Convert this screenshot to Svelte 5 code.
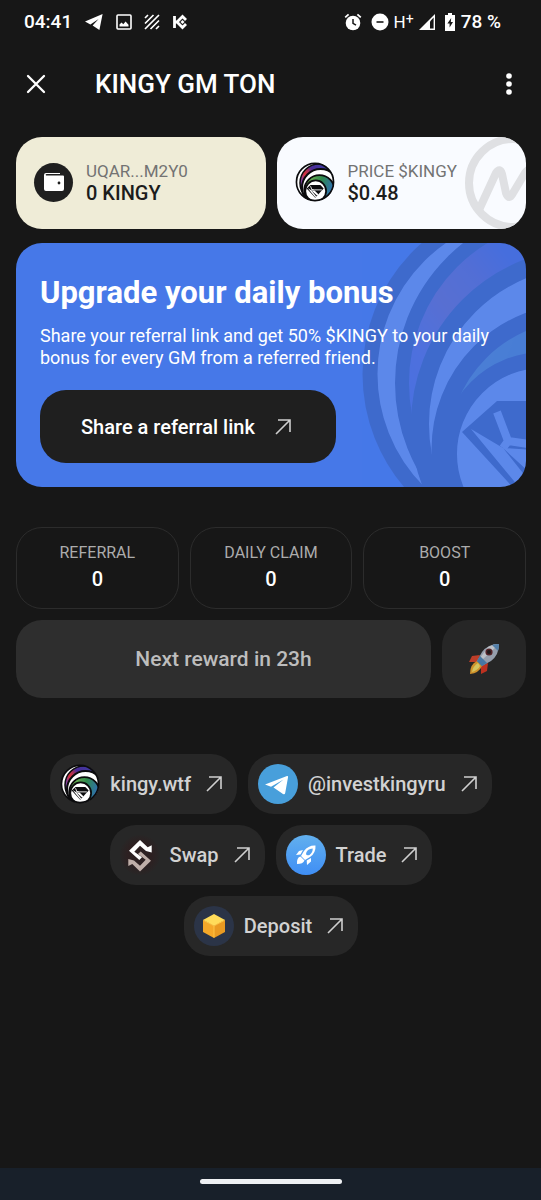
<script lang="ts">
  type Chip = { label: string; icon: string; href: string };

  const stats = [
    { label: 'REFERRAL', value: 0 },
    { label: 'DAILY CLAIM', value: 0 },
    { label: 'BOOST', value: 0 }
  ];

  const chips: Chip[] = [
    { label: 'kingy.wtf', icon: 'kingy', href: '#kingy' },
    { label: '@investkingyru', icon: 'telegram', href: '#telegram' },
    { label: 'Swap', icon: 'swap', href: '#swap' },
    { label: 'Trade', icon: 'trade', href: '#trade' },
    { label: 'Deposit', icon: 'deposit', href: '#deposit' }
  ];
</script>

<!-- Nested ring logo, id keeps the gradient references unique -->
{#snippet kingyLogo(id: string)}
  <svg class="logo" viewBox="-180 -180 360 360" aria-hidden="true">
    <defs>
      <linearGradient id="{id}-a" gradientUnits="userSpaceOnUse" x1="-130" y1="60" x2="110" y2="-130">
        <stop offset="0" stop-color="#5b3fb0" />
        <stop offset="0.2" stop-color="#8a3f98" />
        <stop offset="0.36" stop-color="#d8343c" />
        <stop offset="0.5" stop-color="#a82f58" />
        <stop offset="0.62" stop-color="#4b2a96" />
        <stop offset="1" stop-color="#3d3aa0" />
      </linearGradient>
      <linearGradient id="{id}-b" gradientUnits="userSpaceOnUse" x1="-80" y1="0" x2="150" y2="80">
        <stop offset="0.1" stop-color="#6aae52" />
        <stop offset="0.5" stop-color="#2f8a4c" />
        <stop offset="1" stop-color="#2f6fb0" />
      </linearGradient>
      <clipPath id="{id}-c"><circle r="170" /></clipPath>
    </defs>
    <g clip-path="url(#{id}-c)" stroke="#0b0b0d">
      <circle r="172" fill="#fff" />
      <circle cx="36" cy="9" r="171" fill="url(#{id}-a)" stroke-width="14" />
      <circle cx="50" cy="50" r="167" fill="#fff" stroke-width="18" />
      <circle cx="40" cy="75" r="137" fill="url(#{id}-b)" stroke-width="17" />
      <circle cx="6" cy="80" r="94" fill="#fff" stroke-width="16" />
      <path d="M-40 27H48L78 58 2 142-75 58Z" fill="#0b0b0d" stroke="none" />
      <path d="M-66 55-34 74 20 142-4 130ZM-34 74-4 76 30 110 20 124Z" fill="#fff" stroke="none" />
      <path d="M-40 38-29 67-2 71H62M-29 67-34 74" fill="none" stroke="#fff" stroke-width="8" />
    </g>
    <circle r="167" fill="none" stroke="#0b0b0d" stroke-width="15" />
  </svg>
{/snippet}

{#snippet arrow()}
  <svg class="arrow" viewBox="0 0 16 16" aria-hidden="true">
    <path d="M3 1H15V13M15 1 1 15" />
  </svg>
{/snippet}

<div class="app">
  <div class="status">
    <div class="status-group">
      <span class="clock">04:41</span>
      <svg width="20" height="18" viewBox="0 0 20 18"><path d="M1 8.6 18.6 1 15.4 17 8.6 12.4 14.6 6 6.4 11.4Z" fill="#fff" /></svg>
      <svg width="16" height="16" viewBox="0 0 16 16"><rect x="1" y="1" width="14" height="14" rx="1" fill="none" stroke="#fff" stroke-width="1.6" /><path d="M3.5 12.5V10.5L5.5 8.5 7.3 10.3 9.6 7.6 12.5 10.7V12.5Z" fill="#fff" /></svg>
      <svg width="16" height="16" viewBox="0 0 16 16"><path d="M1 4 4 1M1 9.5 9.5 1M1 15 15 1M6.5 15 15 6.5M12 15 15 12" fill="none" stroke="#fff" stroke-width="1.7" /></svg>
      <svg width="17" height="18" viewBox="0 0 17 18">
        <path d="M2.500 3V15M2.500 9H5M5 9 10.500 3.500 14 7M5 9 10.500 14.500 14 11" fill="none" stroke="#fff" stroke-width="2.800" />
        <path d="M10.500 7 12.500 9 10.500 11 8.500 9Z" fill="#fff" />
      </svg>
    </div>
    <div class="status-group right">
      <svg width="18" height="18" viewBox="0 0 18 18"><circle cx="9" cy="10" r="7.3" fill="#fff" /><path d="M1.2 4.4 4.6 1.4M16.8 4.4 13.4 1.4" stroke="#fff" stroke-width="1.8" /><path d="M9 6V10.4L12 12.2" fill="none" stroke="#171717" stroke-width="1.5" /></svg>
      <svg class="dnd" width="18" height="18" viewBox="0 0 18 18"><circle cx="9" cy="9" r="8.5" fill="#fff" /><path d="M5.5 9H12.5" stroke="#171717" stroke-width="1.6" /></svg>
      <span class="network">H<span class="plus">+</span></span>
      <svg width="16" height="16" viewBox="0 0 16 16"><path d="M0 16 16 0V16Z" fill="#fff" /><path d="M11 7.4 14.6 3.6V14.6H11Z" fill="#171717" /></svg>
      <svg class="battery" width="12" height="18" viewBox="0 0 12 18"><path d="M4 0H8V2H11V18H1V2H4Z" fill="#fff" /><path d="M7.2 5 3.4 10.6H5.6V14.6L9 9H6.8Z" fill="#171717" /></svg>
      <span class="percent">78 %</span>
    </div>
  </div>

  <header class="topbar">
    <button class="icon-button" aria-label="Close">
      <svg width="20" height="20" viewBox="0 0 20 20"><path d="M2 2 18 18M18 2 2 18" stroke="#fff" stroke-width="2.3" stroke-linecap="round" /></svg>
    </button>
    <h1>KINGY GM TON</h1>
    <button class="icon-button" aria-label="Menu">
      <svg width="8" height="22" viewBox="0 0 8 22" fill="#fff"><circle cx="4" cy="3" r="2.8" /><circle cx="4" cy="11" r="2.8" /><circle cx="4" cy="19" r="2.8" /></svg>
    </button>
  </header>

  <main>
    <div class="cards">
      <section class="card wallet">
        <span class="wallet-icon">
          <svg width="22" height="20" viewBox="0 0 22 20">
            <path d="M3 1H17V2H3.5Q2 2.5 3 3.4H20Q21 3.4 21 4.5V17Q21 19 19 19H3Q1 19 1 17V3Q1 1 3 1Z" fill="#fff" />
            <circle cx="16" cy="11" r="1.4" fill="#1f1f1f" />
          </svg>
        </span>
        <div>
          <div class="card-label">UQAR...M2Y0</div>
          <div class="card-value">0 KINGY</div>
        </div>
      </section>
      <section class="card price">
        <svg class="coin-mark" viewBox="0 0 92 92" fill="none" stroke="#dfe0e3" stroke-width="8">
          <circle cx="49" cy="46" r="44" />
          <path d="M14 75 32 36Q36 30 38 37L42 56Q45 64 49 56L61 36Q67 28 68 38V50" stroke-linejoin="round" />
        </svg>
        {@render kingyLogo('price')}
        <div>
          <div class="card-label">PRICE $KINGY</div>
          <div class="card-value">$0.48</div>
        </div>
      </section>
    </div>

    <section class="banner">
      <div class="banner-logo">{@render kingyLogo('banner')}</div>
      <h2>Upgrade your daily bonus</h2>
      <p>Share your referral link and get 50% $KINGY to your daily bonus for every GM from a referred friend.</p>
      <button class="share">Share a referral link {@render arrow()}</button>
    </section>

    <div class="stats">
      {#each stats as stat}
        <div class="stat">
          <span class="stat-label">{stat.label}</span>
          <span class="stat-value">{stat.value}</span>
        </div>
      {/each}
    </div>

    <div class="reward">
      <button class="next">Next reward in 23h</button>
      <button class="boost" aria-label="Boost">
        <svg width="32" height="32" viewBox="0 0 32 32">
          <path d="M12 12 4 13 1 19 9 19Z" fill="#d8432a" />
          <path d="M20 20 19 28 13 31 13 23Z" fill="#d8341f" />
          <path d="M9 18Q2 21 2 31 11 30 14 23Z" fill="#eda52c" />
          <path d="M10 20Q5 23 4 29 10 27 12 23Z" fill="#f3e06a" />
          <path d="M31 1Q20 1 14 9L9 18 14 23 23 18Q31 12 31 1Z" fill="#a9b4c4" />
          <path d="M31 1Q25 1 20 4L12 15 14 17Z" fill="#d7dce4" />
          <path d="M9 18 12 13 19 20 14 23Z" fill="#4d86b8" />
          <path d="M31 1Q26 1 24 2L30 8Q31 5 31 1Z" fill="#5c8fc0" />
          <circle cx="21" cy="9" r="3.6" fill="#5a2228" />
          <circle cx="21" cy="9" r="2" fill="#1c1719" />
        </svg>
      </button>
    </div>

    <nav class="chips">
      {#each chips as chip}
        <a class="chip" href={chip.href}>
          {#if chip.icon === 'kingy'}
            {@render kingyLogo('chip')}
          {:else if chip.icon === 'telegram'}
            <svg class="logo" viewBox="0 0 40 40">
              <circle cx="20" cy="20" r="20" fill="#489fdb" />
              <path d="M7 20.5 29 12Q30.5 11.5 30 13.5L27.2 29Q26.8 31 25 30L15.5 23.5 25.5 15.5 13 22.7Z" fill="#fff" />
            </svg>
          {:else if chip.icon === 'swap'}
            <svg class="logo" viewBox="0 0 40 40">
              <defs>
                <radialGradient id="swap-bg">
                  <stop offset="0.6" stop-color="#2d2021" />
                  <stop offset="1" stop-color="#282626" />
                </radialGradient>
              </defs>
              <circle cx="20" cy="20" r="20" fill="url(#swap-bg)" />
              <path d="M20 36.400 31 25.700 20.700 16.400 18 19.100 25.700 24.700 20 30.700 14 25.400 8.300 24V31.100L12.300 29.100Z" fill="#bfaea8" />
              <path d="M20 5 9 15.700 19.300 25 22 22.300 14.300 16.700 20 10.700 26 16 31.700 17.400V10.300L27.700 12.300Z" fill="#fff" />
            </svg>
          {:else if chip.icon === 'trade'}
            <svg class="logo" viewBox="0 0 40 40">
              <defs>
                <linearGradient id="trade-bg" x1="0" y1="0" x2="0" y2="1">
                  <stop offset="0" stop-color="#62b0ee" />
                  <stop offset="1" stop-color="#3f8ef5" />
                </linearGradient>
              </defs>
              <circle cx="20" cy="20" r="20" fill="url(#trade-bg)" />
              <g fill="#fff">
                <path fill-rule="evenodd" d="M29.5 10.5Q22.5 10 18 16L15 21 19 25 24 22Q30 18 29.5 10.5ZM26.7 13.5Q27 17 23.5 20 20.5 21 20 19 20 17 22 15 24 13.5 26.7 13.5Z" />
                <path d="M17 15 13 16 10 20 14.5 19.5ZM25 23 25 26.5 21 30 20.7 25.5ZM14.5 21.5Q10.5 22.5 11 29 17 29 18.5 25.5Z" />
              </g>
            </svg>
          {:else}
            <svg class="logo" viewBox="0 0 40 40">
              <circle cx="20" cy="20" r="20" fill="#2b3447" />
              <path d="M20 8 31 14 20 20 9 14Z" fill="#ffdc5a" />
              <path d="M9 14 20 20V32L9 26Z" fill="#f5a829" />
              <path d="M31 14 20 20V32L31 26Z" fill="#e99a22" />
              <path d="M9.5 14.3 20 20 30.5 14.3M20 20V31.5" fill="none" stroke="#ffc445" />
            </svg>
          {/if}
          <span class="chip-label">{chip.label}</span>
          {@render arrow()}
        </a>
      {/each}
    </nav>
  </main>

  <div class="home-bar"><span></span></div>
</div>

<style>
  :global(body) {
    background: #171717;
  }

  .app {
    display: flex;
    flex-direction: column;
    min-height: 100vh;
    background: #171717;
    color: #fff;
    font-family: Roboto, "Liberation Sans", sans-serif;
  }

  button {
    border: none;
    padding: 0;
    color: inherit;
    font: inherit;
    cursor: pointer;
  }

  svg {
    display: block;
    flex: none;
  }

  /* Status bar */
  .status {
    display: flex;
    justify-content: space-between;
    align-items: center;
    height: 44px;
    padding: 0 40px 0 24px;
  }

  .status-group {
    display: flex;
    align-items: center;
    gap: 12px;
  }

  .right {
    gap: 5px;
  }

  .dnd,
  .battery {
    margin-left: 4px;
  }

  .clock,
  .percent {
    font-size: 19px;
    line-height: 24px;
    font-weight: 500;
  }

  .network {
    display: flex;
    font-size: 17px;
    line-height: 24px;
  }

  .plus {
    font-size: 14px;
    line-height: 18px;
  }

  /* Top bar */
  .topbar {
    display: flex;
    align-items: center;
    height: 80px;
    padding: 0 12px 0 16px;
  }

  .icon-button {
    display: flex;
    justify-content: center;
    align-items: center;
    width: 40px;
    height: 40px;
    background: none;
  }

  h1 {
    flex: 1;
    margin: 0 0 0 39px;
    font-size: 26px;
    line-height: 32px;
    font-weight: 500;
  }

  main {
    flex: 1;
    padding: 13px 15px 0 16px;
  }

  /* Wallet and price */
  .cards {
    display: grid;
    grid-template-columns: 1fr 1fr;
    gap: 11px;
  }

  .card {
    position: relative;
    display: flex;
    align-items: center;
    gap: 13px;
    height: 92px;
    padding: 0 18px 2px;
    box-sizing: border-box;
    overflow: hidden;
    border-radius: 26px;
    color: #1c1c1c;
  }

  .wallet {
    background: #efecd7;
  }

  .price {
    background: #f9fbff;
  }

  .wallet-icon {
    display: flex;
    justify-content: center;
    align-items: center;
    width: 39px;
    height: 39px;
    border-radius: 50%;
    background: #1f1f1f;
  }

  .logo {
    width: 40px;
    height: 40px;
  }

  .coin-mark {
    position: absolute;
    top: 0;
    right: -30px;
    width: 92px;
    height: 92px;
  }

  .card-label {
    position: relative;
    font-size: 17px;
    line-height: 22px;
    color: #737373;
  }

  .card-value {
    font-size: 20px;
    line-height: 23px;
    font-weight: 500;
  }

  /* Referral banner */
  .banner {
    position: relative;
    margin-top: 14px;
    padding: 32px 24px 24px;
    overflow: hidden;
    border-radius: 26px;
    background: #4678e8;
  }

  .banner-logo {
    position: absolute;
    top: -49px;
    right: -191px;
    opacity: 0.12;
  }

  .banner-logo .logo {
    width: 360px;
    height: 360px;
  }

  h2 {
    position: relative;
    margin: 0;
    font-size: 31px;
    line-height: 36px;
    font-weight: 700;
  }

  .banner p {
    position: relative;
    margin: 14px 0 21px;
    font-size: 18px;
    line-height: 22px;
  }

  .share {
    position: relative;
    display: flex;
    justify-content: center;
    align-items: center;
    gap: 20px;
    height: 73px;
    padding: 0 45px 0 41px;
    border-radius: 26px;
    background: #1f1f1f;
    font-size: 20px;
    font-weight: 500;
  }

  .arrow {
    width: 16px;
    height: 16px;
    fill: none;
    stroke: #cfcfcf;
    stroke-width: 1.6;
  }

  /* Counters */
  .stats {
    display: grid;
    grid-template-columns: repeat(3, 1fr);
    gap: 11px;
    margin-top: 40px;
  }

  .stat {
    display: flex;
    flex-direction: column;
    align-items: center;
    height: 82px;
    padding-top: 13px;
    box-sizing: border-box;
    border: 1px solid #2c2c2c;
    border-radius: 26px;
  }

  .stat-label {
    font-size: 16px;
    line-height: 24px;
    color: #acacac;
  }

  .stat-value {
    font-size: 20px;
    line-height: 28px;
    font-weight: 500;
  }

  .reward {
    display: flex;
    gap: 11px;
    margin-top: 11px;
  }

  .reward button {
    height: 78px;
    border-radius: 26px;
  }

  .next {
    flex: 1;
    background: #2e2e2e;
    color: #bdbdbd;
    font-size: 21px;
    font-weight: 500;
  }

  .boost {
    display: flex;
    justify-content: center;
    align-items: center;
    width: 84px;
    background: #262626;
  }

  .boost svg {
    opacity: 0.85;
  }

  /* Links */
  .chips {
    display: flex;
    flex-wrap: wrap;
    justify-content: center;
    gap: 11px;
    margin-top: 56px;
    padding: 0 24px;
  }

  .chip {
    display: flex;
    align-items: center;
    height: 60px;
    padding: 0 15px 0 10px;
    border-radius: 26px;
    background: #272727;
    color: #d2d2d2;
    font-size: 20px;
    font-weight: 500;
    text-decoration: none;
  }

  .chip-label {
    margin: 0 15px 0 10px;
  }

  /* Gesture bar */
  .home-bar {
    display: flex;
    justify-content: center;
    height: 32px;
    background: #18202a;
  }

  .home-bar span {
    width: 142px;
    height: 5px;
    margin-top: 11px;
    border-radius: 3px;
    background: #eef0f3;
  }
</style>
